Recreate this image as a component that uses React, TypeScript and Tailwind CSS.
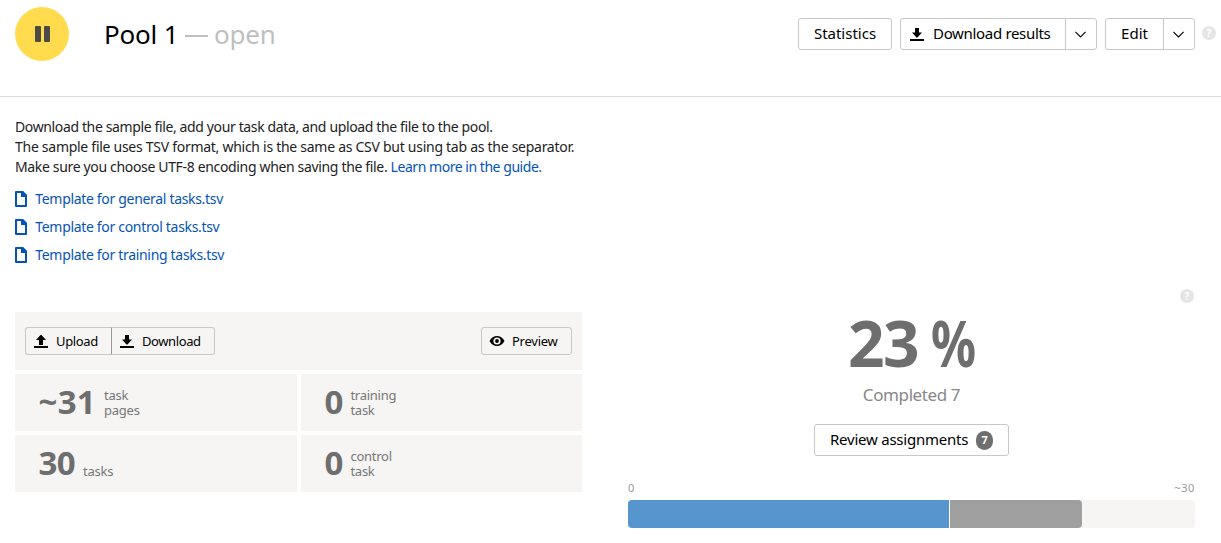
import type { ReactNode } from "react";

function DownloadIcon() {
  return (
    <svg width="14" height="13" viewBox="0 0 14 13" className="mt-px shrink-0" fill="currentColor">
      <path d="M5 0h4v4.500h3L7.500 9.500h-1L2 4.500h3zM0 11h14v2H0z" />
    </svg>
  );
}

function UploadIcon() {
  return (
    <svg width="14" height="13" viewBox="0 0 14 13" className="mt-px shrink-0" fill="currentColor">
      <path d="M5 10h4V5h3L7.500 0h-1L2 5h3zM0 11h14v2H0z" />
    </svg>
  );
}

function EyeIcon() {
  return (
    <svg width="16" height="12" viewBox="0 0 16 12" className="shrink-0">
      <path d="M.5 6C2.300 2.600 5 1 8 1s5.700 1.600 7.500 5C13.700 9.400 11 11 8 11S2.300 9.400.5 6z" fill="#000" />
      <circle cx="8" cy="6" r="3.600" fill="#f6f5f3" />
      <circle cx="8" cy="6" r="1.900" fill="#000" />
    </svg>
  );
}

function FileIcon() {
  return (
    <svg width="12" height="16" viewBox="0 0 12 16" className="shrink-0">
      <path d="M1 1h6.300L11 4.700V15H1z" fill="#fff" stroke="#0454b8" strokeWidth="2" strokeLinejoin="round" />
      <path d="M6 0h2l4 4v2H6z" fill="#0454b8" />
    </svg>
  );
}

function Chevron() {
  return (
    <svg width="11" height="7" viewBox="0 0 11 7" fill="none" stroke="#000" strokeWidth="1.1">
      <path d="M.4.900 5.500 6l5.100-5.100" />
    </svg>
  );
}

function Help() {
  return (
    <span className="flex size-3.5 shrink-0 items-center justify-center rounded-full bg-[#e5e5e5] text-[10px] leading-none font-bold text-white">
      ?
    </span>
  );
}

const button = "flex items-center border border-[#c8c8c8] text-black whitespace-nowrap";

function Template({ children }: { children: ReactNode }) {
  return (
    <a href="#" className="flex h-7 items-center gap-2 text-[#0454b8]">
      <FileIcon />
      <span className="pl-[0.3px] text-sm tracking-[-0.32px]">{children}</span>
    </a>
  );
}

function Stat({ value, lines, tracking = "" }: { value: string; lines: string[]; tracking?: string }) {
  return (
    <div className="flex h-[57px] items-end gap-2 bg-[#f6f5f3] pl-[23.5px]">
      <span className={`pb-[11px] text-[33px] leading-9 font-bold text-[#6e6e6e] ${tracking}`}>{value}</span>
      <span className="flex flex-col pb-[13px] text-[13px] leading-[15px] tracking-[-0.25px] text-[#777]">
        {lines.map((line) => (
          <span key={line}>{line}</span>
        ))}
      </span>
    </div>
  );
}

export default function App() {
  return (
    <div className="h-[543px] w-[1221px] overflow-hidden bg-white font-['Noto_Sans',sans-serif] text-[#222]">
      <header className="flex h-[97px] items-start border-b border-[#dcdcdc] pr-[5px] pl-[15px]">
        <button className="mt-[7px] flex size-[54px] items-center justify-center gap-[3px] rounded-full bg-[#ffdb4d]">
          <span className="h-4 w-1.5 rounded-[1px] bg-[#4c4a45]" />
          <span className="h-4 w-1.5 rounded-[1px] bg-[#4c4a45]" />
        </button>
        <h1 className="mt-4 ml-[35px] flex text-[26px] leading-9 whitespace-nowrap">
          <span className="w-[81px] tracking-[-0.2px] text-black">Pool 1</span>
          <span className="w-[29px] pt-[19px]">
            <span className="block h-[1.5px] w-[23px] bg-[#bfbfbf]" />
          </span>
          <span className="tracking-[-0.2px] text-[#bfbfbf]">open</span>
        </h1>
        <div className="mt-[18px] ml-auto flex h-8 gap-2 text-[15px]">
          <button className={`${button} w-[94px] justify-center rounded-[3px] pb-0.5`}>Statistics</button>
          <div className="flex">
            <button className={`${button} w-[166px] rounded-l-[3px] pl-[9px]`}>
              <DownloadIcon />
              <span className="ml-[9px] pb-0.5 tracking-[-0.32px]">Download results</span>
            </button>
            <button className={`${button} -ml-px w-8 rounded-r-[3px] pl-[9px]`}>
              <Chevron />
            </button>
          </div>
          <div className="flex">
            <button className={`${button} w-[59px] justify-center rounded-l-[3px] pb-0.5`}>Edit</button>
            <button className={`${button} -ml-px w-8 rounded-r-[3px] pl-[9px]`}>
              <Chevron />
            </button>
          </div>
          <span className="-ml-px flex h-[30px] items-center">
            <Help />
          </span>
        </div>
      </header>

      <section className="px-[15px] pt-5">
        <div className="text-sm leading-5 whitespace-nowrap">
          <p className="tracking-[-0.37px]">Download the sample file, add your task data, and upload the file to the pool.</p>
          <p className="tracking-[-0.275px]">The sample file uses TSV format, which is the same as CSV but using tab as the separator.</p>
          <p className="tracking-[-0.34px]">
            Make sure you choose UTF-8 encoding when saving the file.{" "}
            <a href="#" className="tracking-[-0.46px] text-[#0454b8]">Learn more in the guide.</a>
          </p>
        </div>
        <div className="mt-2">
          <Template>Template for general tasks.tsv</Template>
          <Template>Template for control tasks.tsv</Template>
          <Template>Template for training tasks.tsv</Template>
        </div>
      </section>

      <main className="flex pr-[26px] pl-[15px]">
        <section className="mt-[43px] flex w-[567px] flex-col gap-1">
          <div className="flex h-[58px] items-center justify-between bg-[#f6f5f3] px-2.5 text-[13px]">
            <div className="flex h-7">
              <button className={`${button} w-[87px] rounded-l-[3px] border-r-[#999] pl-2`}>
                <UploadIcon />
                <span className="ml-2 pt-0.5 tracking-[-0.35px]">Upload</span>
              </button>
              <button className={`${button} w-[103px] rounded-r-[3px] border-l-0 pl-2`}>
                <DownloadIcon />
                <span className="ml-2 pt-0.5 tracking-[-0.4px]">Download</span>
              </button>
            </div>
            <button className={`${button} h-7 w-[91px] rounded-[3px] pl-[7px]`}>
              <EyeIcon />
              <span className="ml-[7px] pt-0.5 tracking-[-0.25px]">Preview</span>
            </button>
          </div>
          <div className="grid grid-cols-[282px_281px] gap-1">
            <Stat value="~31" lines={["task", "pages"]} tracking="tracking-[0.3px]" />
            <Stat value="0" lines={["training", "task"]} tracking="tracking-[-1px]" />
            <Stat value="30" lines={["tasks"]} tracking="tracking-[-0.6px]" />
            <Stat value="0" lines={["control", "task"]} tracking="tracking-[-1px]" />
          </div>
        </section>

        <section className="ml-[46px] flex w-[567px] flex-col items-center pt-5">
          <div className="mr-px self-end">
            <Help />
          </div>
          <div className="mt-0.5 flex w-[127px] text-[64px] leading-[76px] font-bold whitespace-pre text-[#6e6e6e]">
            <span className="w-[83px] shrink-0 tracking-[-1.5px]">{"23 "}</span>
            <span className="w-14 shrink-0 origin-left scale-x-[.78]">%</span>
          </div>
          <div className="mt-0.5 text-[17px] leading-6 tracking-[-0.4px] text-[#888]">Completed 7</div>
          <button className={`${button} mt-[17px] h-8 w-[195px] rounded-[3px] pl-[15px] text-[15px]`}>
            <span className="pb-0.5 tracking-[-0.23px]">Review assignments</span>
            <span className="ml-2 flex h-[19px] w-[17px] items-center justify-center rounded-[9px] bg-[#6e6e6e] text-[11px] font-bold text-white">7</span>
          </button>
          <div className="mt-6 flex h-4 w-full justify-between text-[11px] leading-4 text-[#999]">
            <span>0</span>
            <span className="tracking-[0.6px]">~30</span>
          </div>
          <div className="mt-1 flex h-7 w-full gap-px overflow-hidden rounded-[4px] bg-[#f6f5f3]">
            <div className="w-[321px] bg-[#5695cd] shadow-[1px_0_0_#fff]" />
            <div className="w-[132px] rounded-r-[4px] bg-[#9f9f9f]" />
          </div>
        </section>
      </main>
    </div>
  );
}
